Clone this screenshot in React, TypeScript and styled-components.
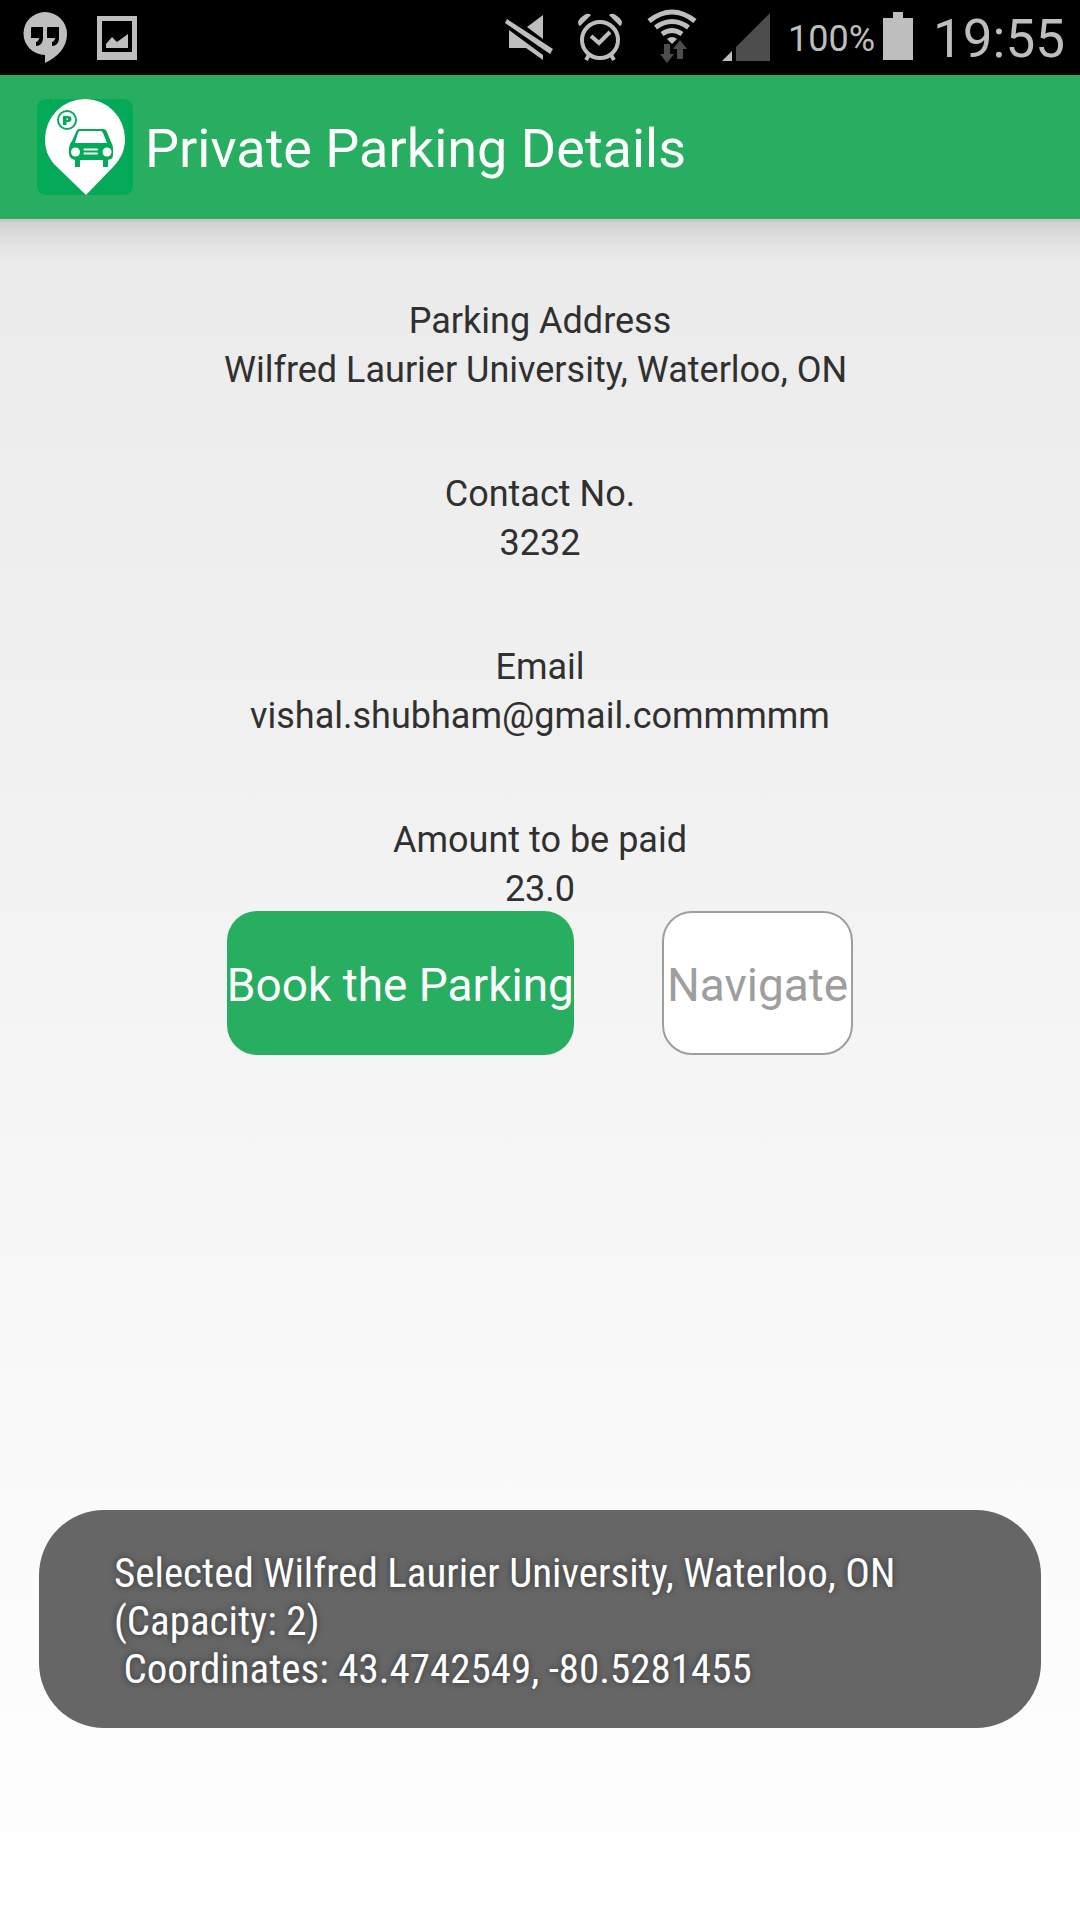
import React from "react";
import styled, { createGlobalStyle } from "styled-components";

const GlobalStyle = createGlobalStyle`
  * { box-sizing: border-box; }
  body {
    margin: 0;
    font-family: Roboto, "Noto Sans", sans-serif;
    color: #303030;
  }
`;

const Screen = styled.div`
  display: flex;
  flex-direction: column;
  min-height: 100vh;
  background: linear-gradient(#e8e8e8, #ffffff);
`;

const StatusBar = styled.div`
  display: flex;
  align-items: center;
  justify-content: space-between;
  height: 75px;
  padding: 0 15px 0 20px;
  background: #000000;
  color: #bebebe;
`;

const StatusGroup = styled.div<{ $gap: number }>`
  display: flex;
  align-items: center;
  gap: ${(p) => p.$gap}px;
`;

const Battery = styled.span`
  display: flex;
  align-items: center;
  gap: 8px;
  font-size: 36px;
  line-height: 75px;
`;

const BatteryLevel = styled.span`
  padding-top: 3px;
  line-height: 72px;
`;

const Clock = styled.time`
  padding: 3px 0 0 2px;
  font-size: 53px;
  line-height: 72px;
`;

const AppBar = styled.header`
  display: flex;
  align-items: center;
  gap: 12px;
  height: 144px;
  padding: 0 37px;
  background: #27ae60;
  color: #ffffff;
`;

const Title = styled.h1`
  margin: 0;
  padding-top: 4px;
  font-size: 54px;
  font-weight: 400;
  line-height: 64px;
`;

const Content = styled.main`
  display: flex;
  flex: 1;
  flex-direction: column;
  align-items: center;
  padding-top: 80px;
  background:
    linear-gradient(rgba(0, 0, 0, 0.04), rgba(0, 0, 0, 0.04)) top / 100% 3px no-repeat,
    linear-gradient(rgba(0, 0, 0, 0.12), rgba(0, 0, 0, 0.03) 60%, rgba(0, 0, 0, 0)) top / 100% 45px no-repeat;
`;

const Details = styled.dl`
  display: flex;
  flex-direction: column;
  gap: 80px;
  margin: 0;
  text-align: center;
  font-size: 36px;
  line-height: 44px;
`;

const Detail = styled.div`
  display: flex;
  flex-direction: column;
  gap: 5px;
`;

const Term = styled.dt`
  margin: 0;
`;

const Value = styled.dd`
  margin: 0;
  white-space: pre;
`;

const Actions = styled.div`
  display: flex;
  gap: 88px;
`;

const ActionButton = styled.button<{ $primary?: boolean }>`
  height: 144px;
  padding: ${(p) => (p.$primary ? "4px 0 0" : "4px 3px 0")};
  border: ${(p) => (p.$primary ? "0" : "2px solid #9e9e9e")};
  border-radius: 30px;
  background: ${(p) => (p.$primary ? "#27ae60" : "#ffffff")};
  color: ${(p) => (p.$primary ? "#ffffff" : "#9e9e9e")};
  font-family: inherit;
  font-size: 46px;
  white-space: nowrap;
`;

const Toast = styled.div`
  position: fixed;
  right: 39px;
  bottom: 192px;
  left: 39px;
  padding: 39px 75px 35px;
  border-radius: 65px;
  background: #666666;
  color: #ffffff;
  font-family: "Roboto Condensed", Roboto, sans-serif;
  font-size: 41px;
  line-height: 48px;
  text-shadow: 0 0 6px rgba(0, 0, 0, 0.5);
  white-space: pre-wrap;
`;

const details = [
  { term: "Parking Address", value: "Wilfred Laurier University, Waterloo, ON " },
  { term: "Contact No.", value: "3232" },
  { term: "Email", value: "vishal.shubham@gmail.commmmm" },
  { term: "Amount to be paid", value: "23.0" },
];

const HangoutsIcon = () => (
  <svg width="50" height="75" viewBox="20 0 50 75" aria-hidden="true">
    <path fill="#bebebe" d="M45 12a22 22 0 0 1 22 22c0 13-9 23-22 29v-8a21.500 21.500 0 0 1 0-43z" />
    <path fill="#000" d="M31 28q0-1 1-1h11v11c0 5-3 8-7 8v-4q3-1 3-4h-8zM47 28q0-1 1-1h11v11c0 5-3 8-7 8v-4q3-1 3-4h-8z" />
  </svg>
);

const ImageIcon = () => (
  <svg width="40" height="75" viewBox="97 0 40 75" aria-hidden="true">
    <path fill="#bebebe" fillRule="evenodd" d="M97 16h40v44H97zM102 21v31h30V21z" />
    <path fill="#bebebe" d="M106 48v-4l6-7 5 5 11-8v14z" />
  </svg>
);

const MuteIcon = () => (
  <svg width="48" height="75" viewBox="503 0 48 75" aria-hidden="true">
    <path fill="#bebebe" d="M541 15v24l-16-12zM507 30l34 25v5l-17-12h-17zM505 19l46 30-3 5-45-31z" />
  </svg>
);

const AlarmIcon = () => (
  <svg width="44" height="75" viewBox="577 0 44 75" aria-hidden="true">
    <g fill="none" stroke="#bebebe">
      <circle cx="599" cy="40" r="18" strokeWidth="4" />
      <path d="M590 36l8 7 11-11" strokeWidth="4" />
      <path d="M588 55l-3 5M610 55l3 5" strokeWidth="4" />
    </g>
    <path fill="#bebebe" d="M577 22q1-4 8-8 3-1 5 1l-11 11q-2-1-2-4zM621 22q-1-4-8-8-3-1-5 1l11 11q2-1 2-4z" />
  </svg>
);

const WifiIcon = () => (
  <svg width="50" height="75" viewBox="649 0 50 75" aria-hidden="true">
    <g fill="none" stroke="#bebebe" strokeWidth="5">
      <path d="M651 21q23-18 46 0M657.500 27.500q16.500-12 33 0M664 34q10-7 20 0" />
    </g>
    <path fill="#bebebe" d="M669 39q5-4 10 0l-5 5z" />
    <path fill="#4d4d4d" d="M666 44h6v10h4l-7 9-7-9h4zM679 59v-10h-4l7-9 7 9h-4v10z" />
  </svg>
);

const SignalIcon = () => (
  <svg width="48" height="75" viewBox="722 0 48 75" aria-hidden="true">
    <path fill="#bebebe" d="M722 61l10-10v10z" />
    <path fill="#4d4d4d" d="M736 61V47l34-34v48z" />
  </svg>
);

const BatteryIcon = () => (
  <svg width="30" height="75" viewBox="883 0 30 75" aria-hidden="true">
    <path fill="#bebebe" d="M893 12h10v6h10v42h-30V18h10z" />
  </svg>
);

const ParkingLogo = () => (
  <svg width="96" height="96" viewBox="0 0 96 96" role="img" aria-label="Parking">
    <rect width="96" height="96" rx="9" fill="#04aa58" />
    <path fill="#fff" d="M48 0a40 40 0 0 1 40 40c0 11-4 19-11 27L49 96 17 65C11 58 8 50 8 40A40 40 0 0 1 48 0z" />
    <circle cx="30" cy="21" r="9" fill="none" stroke="#04aa58" strokeWidth="2" />
    <path fill="#04aa58" fillRule="evenodd" d="M26 17h5q3.500 0 3.500 3t-3.500 3h-1.500v3H26zM29.500 19.500v1.500h1.500v-1.500z" />
    <path
      fill="#04aa58"
      fillRule="evenodd"
      d="M42 30h24q3 0 4 3l4 10q2 3 2 6v7q0 3-2 4l-3 1v7h-5v-7H43v7h-5v-7l-3-1q-3-2-3-5v-6q0-4 3-7l4-9q1-3 3-3zM43 32q-1 0-2 2l-3 10h32l-4-10q-1-2-2-2z"
    />
    <circle cx="38.500" cy="53" r="4.500" fill="#fff" />
    <circle cx="70" cy="53" r="4.500" fill="#fff" />
    <path d="M47.500 50.500h12.500M47.500 54.500h12.500" stroke="#fff" strokeWidth="2" strokeLinecap="round" />
  </svg>
);

export default function App() {
  return (
    <Screen>
      <GlobalStyle />
      <StatusBar>
        <StatusGroup $gap={27}>
          <HangoutsIcon />
          <ImageIcon />
        </StatusGroup>
        <StatusGroup $gap={18}>
          <StatusGroup $gap={25}>
            <MuteIcon />
            <AlarmIcon />
            <WifiIcon />
            <SignalIcon />
          </StatusGroup>
          <Battery>
            <BatteryLevel>100%</BatteryLevel>
            <BatteryIcon />
          </Battery>
          <Clock>19:55</Clock>
        </StatusGroup>
      </StatusBar>
      <AppBar>
        <ParkingLogo />
        <Title>Private Parking Details</Title>
      </AppBar>
      <Content>
        <Details>
          {details.map((d) => (
            <Detail key={d.term}>
              <Term>{d.term}</Term>
              <Value>{d.value}</Value>
            </Detail>
          ))}
        </Details>
        <Actions>
          <ActionButton type="button" $primary>
            Book the Parking
          </ActionButton>
          <ActionButton type="button">Navigate</ActionButton>
        </Actions>
      </Content>
      <Toast role="status">
        {"Selected Wilfred Laurier University, Waterloo, ON \n(Capacity: 2)\n Coordinates: 43.4742549, -80.5281455"}
      </Toast>
    </Screen>
  );
}
